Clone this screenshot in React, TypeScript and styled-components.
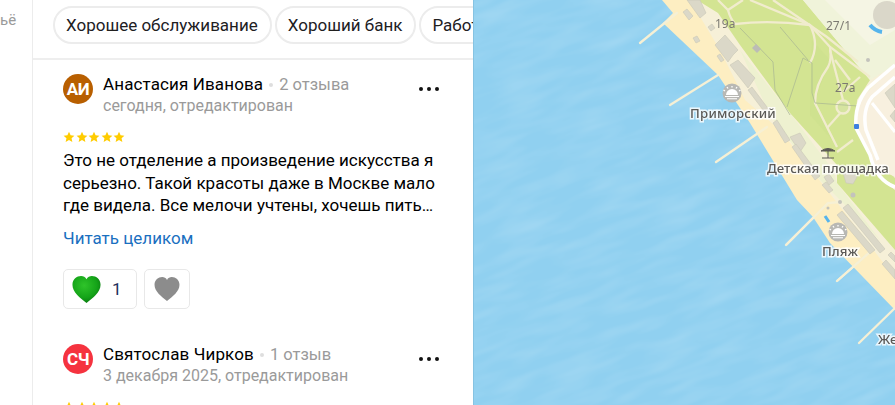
import React from "react";
import styled, { createGlobalStyle } from "styled-components";

const GlobalStyle = createGlobalStyle`
  html, body {
    margin: 0;
    height: 100%;
    overflow: hidden;
    background: #fff;
    font-family: Roboto, "Liberation Sans", sans-serif;
  }
`;

const Page = styled.div`
  display: flex;
  width: 895px;
  height: 405px;
  overflow: hidden;
`;

const Sidebar = styled.aside`
  width: 32px;
  flex: none;
  border-right: 1px solid #ececec;
  padding-top: 11px;
  font-size: 15px;
  line-height: 18px;
  color: #9a9a9a;
`;

const Panel = styled.main`
  width: 440px;
  flex: none;
  overflow: hidden;
`;

const ChipRow = styled.div`
  display: flex;
  gap: 3px;
  height: 52px;
  margin-bottom: 14px;
  padding: 6px 0 0 20px;
  border-bottom: 2px solid #eeeeee;
  overflow: hidden;
`;

const Chip = styled.div`
  flex: none;
  height: 34px;
  padding: 0 12px 0 11px;
  border: 2px solid #ececec;
  border-radius: 19px;
  font-size: 17px;
  line-height: 34px;
  color: #21201f;
  white-space: nowrap;
`;

const Review = styled.article`
  padding: 0 30px;
`;

const Header = styled.header`
  display: flex;
  gap: 10px;
  height: 46px;
`;

const Avatar = styled.div<{ $color: string }>`
  width: 30px;
  height: 30px;
  flex: none;
  border-radius: 50%;
  background: ${(p) => p.$color};
  color: #fff;
  font-size: 17px;
  font-weight: 700;
  line-height: 30px;
  text-align: center;
  letter-spacing: -0.5px;
`;

const Author = styled.div`
  flex: 1;
  margin-top: -1px;
`;

const NameRow = styled.div`
  font-size: 17px;
  line-height: 22px;
  letter-spacing: 0.12px;
  color: #000;
`;

const Count = styled.span`
  font-size: 16.5px;
  letter-spacing: 0;
  color: #9a9a9a;
`;

const Dot = styled.span`
  display: inline-block;
  width: 4px;
  height: 4px;
  margin: 0 6px 3px 6px;
  border-radius: 50%;
  background: #dedede;
`;

const DateLine = styled.div`
  font-size: 16px;
  line-height: 20px;
  color: #9a9a9a;
`;

const More = styled.div`
  display: flex;
  gap: 4px;
  margin: 13px 4px 0 0;
  height: 4px;
`;

const MoreDot = styled.span`
  width: 4px;
  height: 4px;
  border-radius: 50%;
  background: #111;
`;

const Stars = styled.div`
  display: flex;
  gap: 0.5px;
  height: 12px;
  margin-top: 11px;
`;

const Text = styled.p`
  margin: 6px 0 0;
  font-size: 17px;
  line-height: 22.5px;
  color: #000;
`;

const ReadMore = styled.a`
  display: block;
  margin-top: 10.5px;
  font-size: 17px;
  line-height: 22px;
  color: #1a6fbf;
`;

const Reactions = styled.div`
  display: flex;
  gap: 7px;
  margin: 20px 0 35px;
`;

const ReactionButton = styled.div<{ $padding: number }>`
  display: flex;
  align-items: center;
  box-sizing: border-box;
  height: 40px;
  padding: 0 ${(p) => p.$padding}px;
  border: 1px solid #e8e8e8;
  border-radius: 5px;
  font-size: 17px;
  color: #21305a;
`;

const ReactionCount = styled.span`
  margin: 0 6px 0 11px;
`;

const MapArea = styled.section`
  flex: 1;
  min-width: 0;
  height: 405px;
  overflow: hidden;
`;

const MapSvg = styled.svg`
  display: block;
  width: 422px;
  height: 405px;
`;

const MapLabel = styled.text<{ $spacing?: number }>`
  font-family: "Noto Sans", Roboto, sans-serif;
  font-size: 13.2px;
  font-weight: 500;
  letter-spacing: ${(p) => p.$spacing ?? 0}px;
  fill: #5c5a57;
  stroke: #fff;
  stroke-width: 3px;
  stroke-opacity: 0.8;
  paint-order: stroke;
  filter: blur(0.3px);
`;

const HouseLabel = styled.text`
  font-family: "Noto Sans", Roboto, sans-serif;
  font-size: 12px;
  fill: #7c7a72;
  filter: blur(0.3px);
`;

function Star() {
  return (
    <svg width="12" height="12" viewBox="0 0 24 24">
      <path
        d="M12 1.5l3.2 7 7.6.8-5.7 5.1 1.6 7.5L12 18l-6.7 3.900 1.600-7.500L1.200 9.300l7.600-.8z"
        fill="#fc0"
      />
    </svg>
  );
}

function Heart({ green }: { green?: boolean }) {
  const d =
    "M15 27C9 22 2 17 2 10C2 5 6 2 10 2C12 2 14 3 15 5C16 3 18 2 20 2C24 2 28 5 28 10C28 17 21 22 15 27Z";
  return (
    <svg width={green ? 29 : 26} height={green ? 27 : 24} viewBox="2 2 26 25">
      <defs>
        <radialGradient id="greenHeart" cx="42%" cy="35%" r="70%">
          <stop offset="0%" stopColor="#2fc42a" />
          <stop offset="65%" stopColor="#14a318" />
          <stop offset="100%" stopColor="#08740f" />
        </radialGradient>
      </defs>
      <path d={d} fill={green ? "url(#greenHeart)" : "#8c8c8c"} />
    </svg>
  );
}

function BeachIcon({ x, y }: { x: number; y: number }) {
  return (
    <g transform={`translate(${x} ${y})`}>
      <circle r="9.500" fill="#b8b8b4" />
      <path d="M-6 2a6 6 0 0 1 12 0z" fill="#fff" />
      <path d="M-7 3.500h14M-5 5.800h10" stroke="#fff" strokeWidth="1.100" />
      <path
        d="M-7-2l-1.500-1M-4-4.500l-1-1.500M0-5.500v-1.500M4-4.500l1-1.500M7-2l1.500-1"
        stroke="#fff"
        strokeWidth="1.300"
      />
    </g>
  );
}

const piers = [
  [640, 43, 677, 13],
  [670, 105, 718, 75],
  [716, 162, 767, 127],
  [786, 245, 828, 203],
  [837, 281, 870, 252],
  [859, 343, 895, 308],
];

const parkPaths = [
  "M718 0L728 10L743 0",
  "M728 10Q730 18 735 24Q770 20 810 25",
  "M750 0L810 25L830 47L870 77",
  "M773 0L827 37L858 62",
  "M810 25Q820 45 810 63",
  "M830 47Q832 60 828 67Q815 85 815 103L837 147",
  "M830 50L843 100",
  "M860 77L843 92",
  "M843 110L827 128",
  "M853 140L837 152",
  "M835 60L850 80",
];

const thinPaths = [
  "M740 28L773 62L775 90L790 115",
  "M787 107L803 58L812 63L812 93L815 103L858 106",
  "M780 27L808 60",
];

const buildings = [
  "M687 0H700L706 13L700 18Z",
  "M683 12L687 9L693 16L689 20Z",
  "M708 27L712 24L715 28L711 31Z",
  "M693 38L697 36L700 41L696 43Z",
  "M717 56L720 54L724 60L721 62Z",
  "M715 45L725 35L738 50L733 55L728 62Z",
  "M730 65L738 60L755 78L748 88Z",
  "M748 90L752 87L773 115L769 118Z",
  "M773 123L777 120L790 140L785 143Z",
  "M790 137L800 133L806 143L800 152Z",
  "M792 147L796 144L820 176L815 180Z",
  "M824 177L829 174L834 181L829 185Z",
  "M822 185L826 182L833 190L829 193Z",
  "M843 173L851 170L857 177L853 184L846 183Z",
  "M843 208L848 204L885 249L880 253Z",
  "M837 215L842 211L875 250L870 254Z",
  "M882 264L886 260L895 270V279Z",
  "M888 255L891 252L895 256V262Z",
  "M885 93L895 84V108Z",
  "M890 116L895 110V122Z",
];

function CityMap() {
  return (
    <MapSvg viewBox="473 0 422 405">
      <defs>
        <filter id="soft">
          <feGaussianBlur stdDeviation="0.7" />
        </filter>
        <filter id="ripple" x="0" y="0" width="100%" height="100%">
          <feTurbulence type="fractalNoise" baseFrequency="0.02 0.09" numOctaves="2" seed="4" />
          <feColorMatrix values="0 0 0 0 1 0 0 0 0 1 0 0 0 0 1 0 0 0 0.25 -0.09" />
        </filter>
      </defs>
      <rect x="473" y="0" width="422" height="405" fill="#90d0f0" />
      <g transform="rotate(-20 680 200)">
        <rect x="300" y="-200" width="800" height="800" filter="url(#ripple)" />
      </g>
      <rect x="473" y="0" width="1" height="405" fill="#86c3e2" />
      <g filter="url(#soft)">
        <path d="M662 0L673 13L663 23L718 75L750 123L797 200L813 217L830 243L895 310V0Z" fill="#fdeec2" />
        <path d="M690 0L720 50L745 100L780 130L835 200L895 278V0Z" fill="#f6f0d8" />
        <path d="M740 50L790 113L833 170L837 183L880 240L820 180L770 115Z" fill="#eef1d0" />
        <path d="M697 0L718 13L740 45L790 113L837 165L837 183L895 250V187L878 177L867 150L855 128L857 100L870 80L853 60L803 0Z" fill="#d3e492" />
        <path d="M803 0H895V65L870 80L853 60Z" fill="#f0f3da" />
        <path d="M825 0L870 45L895 30V0Z" fill="#f5f5e4" />
        <path d="M860 100L895 65V190L878 177L867 150L855 128Z" fill="#f8f0df" />
        <path d="M880 175Q890 172 895 178V186L885 180Z" fill="#d3e492" />
        <path d="M812 40L830 60L815 100L832 140L810 115Z" fill="#cbe08b" opacity="0.5" />
        {parkPaths.map((d) => (
          <path key={d} d={d} fill="none" stroke="#f1ecce" strokeWidth="2.300" />
        ))}
        <circle cx="843" cy="107" r="6.500" fill="#d6e4a0" stroke="#f1ecce" strokeWidth="2.300" />
        {thinPaths.map((d) => (
          <path key={d} d={d} fill="none" stroke="#a7b592" strokeWidth="0.700" />
        ))}
        {piers.map(([x1, y1, x2, y2]) => (
          <line key={x1} x1={x1} y1={y1} x2={x2} y2={y2} stroke="#f6f0d5" strokeWidth="2.300" strokeLinecap="round" />
        ))}
        <path d="M786 245L828 203L840 202M837 281L870 252" fill="none" stroke="#f6f0d5" strokeWidth="2.300" />
        {buildings.map((d) => (
          <path key={d} d={d} fill="#dbd8c8" stroke="#cac7b7" strokeWidth="0.600" />
        ))}
        <path d="M895 65L868 88Q854 104 856 128L870 155Q876 180 895 187" fill="none" stroke="#fff" strokeWidth="3.500" />
        <path d="M895 77L872 97Q862 110 866 130L878 160" fill="none" stroke="#fff" strokeWidth="3.500" />
        <path d="M872 103L895 132" fill="none" stroke="#fff" strokeWidth="3" />
        <circle cx="887" cy="15" r="14" fill="#dad7c9" />
        <path d="M870 25Q875 31 882 32" fill="none" stroke="#56b4ec" strokeWidth="4" />
        <path d="M825 216L829 222" fill="none" stroke="#56b4ec" strokeWidth="3" />
        <circle cx="868" cy="60" r="2" fill="#c3c3bc" />
        <circle cx="853" cy="195" r="2.500" fill="#c3c3bc" />
        <circle cx="840" cy="202" r="2" fill="#c3c3bc" />
        <circle cx="828" cy="208" r="1.500" fill="#c3c3bc" />
        <path d="M752 48l4-4 5 5-4 4z" fill="#bcbcb6" />
      </g>
      <rect x="854" y="124" width="5" height="5" rx="1" fill="#3d7fe0" />
      <path d="M821 151q7-5 14 0zM828 151v7M822 158h12" fill="#5c5a55" stroke="#5c5a55" strokeWidth="1" />
      <BeachIcon x={732} y={93} />
      <BeachIcon x={838} y={232} />
      <MapLabel x={690} y={118} $spacing={0.25}>Приморский</MapLabel>
      <MapLabel x={767} y={173}>Детская площадка</MapLabel>
      <MapLabel x={822} y={256}>Пляж</MapLabel>
      <MapLabel x={878} y={344}>Же</MapLabel>
      <HouseLabel x={715} y={28}>19а</HouseLabel>
      <HouseLabel x={826} y={30}>27/1</HouseLabel>
      <HouseLabel x={835} y={92}>27а</HouseLabel>
    </MapSvg>
  );
}

function StarRow() {
  return (
    <Stars>
      {[1, 2, 3, 4, 5].map((n) => (
        <Star key={n} />
      ))}
    </Stars>
  );
}

function ReviewHeader(props: { initials: string; color: string; name: string; count: string; date: string }) {
  return (
    <Header>
      <Avatar $color={props.color}>{props.initials}</Avatar>
      <Author>
        <NameRow>
          {props.name}
          <Dot />
          <Count>{props.count}</Count>
        </NameRow>
        <DateLine>{props.date}</DateLine>
      </Author>
      <More>
        <MoreDot />
        <MoreDot />
        <MoreDot />
      </More>
    </Header>
  );
}

export default function App() {
  return (
    <Page>
      <GlobalStyle />
      <Sidebar>ьё</Sidebar>
      <Panel>
        <ChipRow>
          <Chip>Хорошее обслуживание</Chip>
          <Chip>Хороший банк</Chip>
          <Chip>Работа сотрудников</Chip>
        </ChipRow>
        <Review>
          <ReviewHeader
            initials="АИ"
            color="#b85f00"
            name="Анастасия Иванова"
            count="2 отзыва"
            date="сегодня, отредактирован"
          />
          <StarRow />
          <Text>
            Это не отделение а произведение искусства я
            <br />
            серьезно. Такой красоты даже в Москве мало
            <br />
            где видела. Все мелочи учтены, хочешь пить…
          </Text>
          <ReadMore>Читать целиком</ReadMore>
          <Reactions>
            <ReactionButton $padding={8}>
              <Heart green />
              <ReactionCount>1</ReactionCount>
            </ReactionButton>
            <ReactionButton $padding={9}>
              <Heart />
            </ReactionButton>
          </Reactions>
        </Review>
        <Review>
          <ReviewHeader
            initials="СЧ"
            color="#f5333f"
            name="Святослав Чирков"
            count="1 отзыв"
            date="3 декабря 2025, отредактирован"
          />
          <StarRow />
        </Review>
      </Panel>
      <MapArea>
        <CityMap />
      </MapArea>
    </Page>
  );
}
